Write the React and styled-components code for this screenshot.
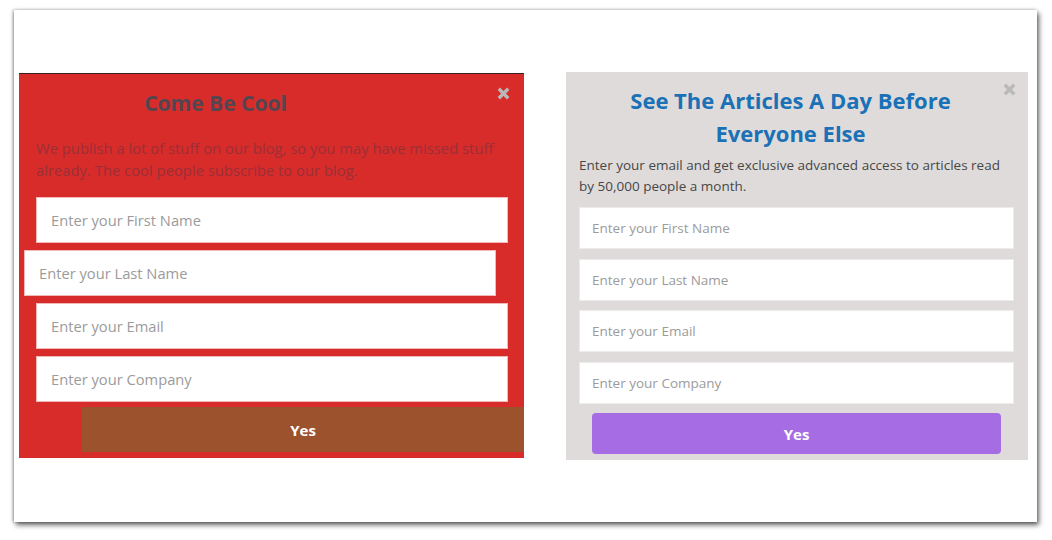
import React from "react";
import styled, { createGlobalStyle } from "styled-components";

const GlobalStyle = createGlobalStyle`
  body {
    margin: 0;
    padding-bottom: 18px;
    min-height: 540px;
    box-sizing: border-box;
    background: #ffffff;
    font-family: "Open Sans", "Liberation Sans", sans-serif;
  }
`;

const Card = styled.div`
  box-sizing: border-box;
  margin: 10px 0 0 14px;
  width: 1023px;
  height: 512px;
  background: #ffffff;
  box-shadow: 2px 3px 5px rgba(0, 0, 0, 0.6), -1px 0 3px rgba(0, 0, 0, 0.35);
  display: flex;
  align-items: flex-start;
  gap: 42px;
  padding-left: 5px;
`;

const Panel = styled.div`
  position: relative;
  box-sizing: border-box;
  display: flex;
  flex-direction: column;
  width: ${(p) => p.$width}px;
  margin-top: ${(p) => p.$top}px;
  background: ${(p) => p.$bg};
  padding: ${(p) => p.$pad};
  border-top: ${(p) => (p.$edge ? "1px solid #3a2020" : "none")};
`;

const Close = styled.svg`
  position: absolute;
  top: ${(p) => p.$y}px;
  right: ${(p) => p.$x}px;
  width: 15px;
  height: 15px;
`;

const Title = styled.h2`
  margin: 0 ${(p) => p.$shift}px ${(p) => p.$after}px 0;
  font-size: ${(p) => p.$size}px;
  line-height: ${(p) => p.$lh}px;
  font-weight: 700;
  text-align: center;
  color: ${(p) => p.$color};
`;

const Blurb = styled.p`
  margin: 0 0 ${(p) => p.$after}px;
  font-size: ${(p) => p.$size}px;
  line-height: ${(p) => p.$lh}px;
  color: ${(p) => p.$color};
`;

const Fields = styled.div`
  display: flex;
  flex-direction: column;
  gap: ${(p) => p.$gap}px;
`;

const Field = styled.input`
  box-sizing: border-box;
  height: ${(p) => p.$h}px;
  margin: 0 ${(p) => p.$right}px 0 ${(p) => p.$left}px;
  padding: 0 0 0 ${(p) => p.$inset}px;
  border: 1px solid ${(p) => p.$line};
  background: #ffffff;
  font-family: "Open Sans", "Liberation Sans", sans-serif;
  font-size: ${(p) => p.$size}px;
  color: #333;
  outline: none;
  &::placeholder {
    color: #9b9b9b;
  }
`;

const Submit = styled.button`
  height: ${(p) => p.$h}px;
  margin: ${(p) => p.$m};
  border: none;
  border-radius: ${(p) => p.$radius}px;
  background: ${(p) => p.$bg};
  color: #ffffff;
  font-family: "Open Sans", "Liberation Sans", sans-serif;
  font-size: 15px;
  font-weight: 700;
`;

const CloseIcon = ({ x, y }) => (
  <Close $x={x} $y={y} viewBox="0 0 16 16">
    <path d="M3 3 L13 13 M13 3 L3 13" stroke="#b9b9b9" strokeWidth="3.6" />
  </Close>
);

const names = ["First Name", "Last Name", "Email", "Company"];

export default function App() {
  return (
    <>
      <GlobalStyle />
      <Card>
        <Panel $width={505} $top={63} $bg="#d82c2a" $pad="14px 0 6px 17px" $edge>
          <CloseIcon x={13} y={12} />
          <Title $size={21} $lh={30} $shift={129} $after={19} $color="#534650">
            Come Be Cool
          </Title>
          <Blurb $size={14.8} $lh={22} $after={16} $color="#9a2f38">
            We publish a lot of stuff on our blog, so you may have missed stuff
            already. The cool people subscribe to our blog.
          </Blurb>
          <Fields $gap={7}>
            {names.map((n, i) => (
              <Field
                key={n}
                $h={46}
                $inset={14}
                $size={14.7}
                $line="#f1b8b8"
                $left={i === 1 ? -12 : 0}
                $right={i === 1 ? 28 : 16}
                placeholder={`Enter your ${n}`}
              />
            ))}
          </Fields>
          <Submit $h={45} $m="5px 0 0 46px" $radius={0} $bg="#9d522e">
            Yes
          </Submit>
        </Panel>
        <Panel $width={462} $top={62} $bg="#dfdbda" $pad="12px 14px 6px 13px">
          <CloseIcon x={11} y={10} />
          <Title $size={22} $lh={33} $shift={12} $after={5} $color="#1a71b6">
            See The Articles A Day Before
            <br />
            Everyone Else
          </Title>
          <Blurb $size={13.5} $lh={21} $after={10} $color="#474747">
            Enter your email and get exclusive advanced access to articles read
            by 50,000 people a month.
          </Blurb>
          <Fields $gap={9.7}>
            {names.map((n) => (
              <Field
                key={n}
                $h={42}
                $inset={12}
                $size={13.5}
                $line="#ececec"
                $left={0}
                $right={0}
                placeholder={`Enter your ${n}`}
              />
            ))}
          </Fields>
          <Submit $h={41} $m="9px 13px 0" $radius={4} $bg="#a66ce4">
            Yes
          </Submit>
        </Panel>
      </Card>
    </>
  );
}
